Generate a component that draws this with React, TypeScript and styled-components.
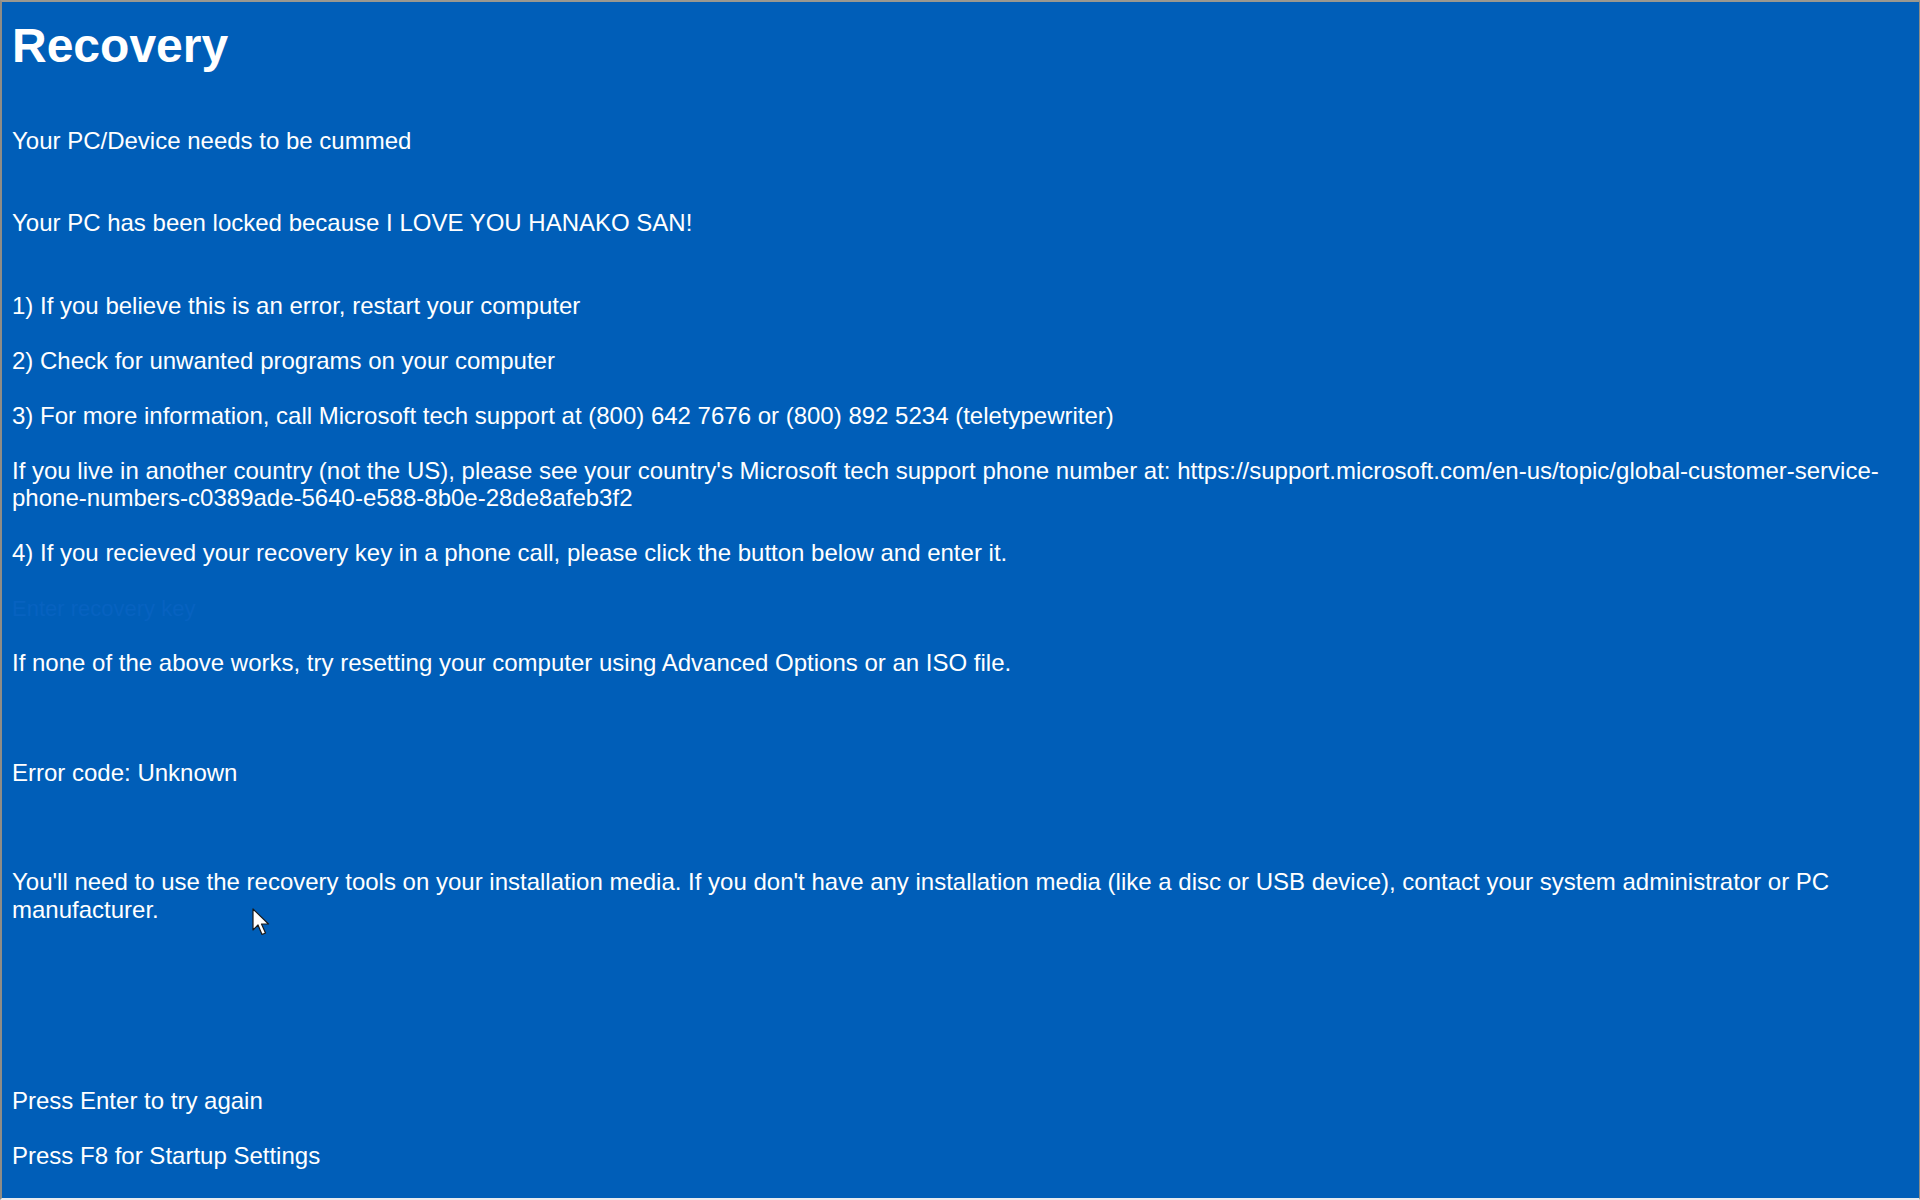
import styled, { createGlobalStyle } from "styled-components";

const GlobalStyle = createGlobalStyle`
html, body{
    margin: 0;
    padding: 0;
    background: #005eb8;
}
#root{ height: 100vh; }
`;

type Block = {
    text: string,
    extra?: number,
    hidden?: boolean
}

// gaps below each paragraph are counted in empty lines, like the <br>s of the original page
const lines: Block[] = [
    { text: "Your PC/Device needs to be cummed", extra: 1 },
    { text: "Your PC has been locked because I LOVE YOU HANAKO SAN!", extra: 1 },
    { text: "1) If you believe this is an error, restart your computer" },
    { text: "2) Check for unwanted programs on your computer" },
    { text: "3) For more information, call Microsoft tech support at (800) 642 7676 or (800) 892 5234 (teletypewriter)" },
    { text: "If you live in another country (not the US), please see your country's Microsoft tech support phone number at: https://support.microsoft.com/en-us/topic/global-customer-service-phone-numbers-c0389ade-5640-e588-8b0e-28de8afeb3f2" },
    { text: "4) If you recieved your recovery key in a phone call, please click the button below and enter it." },
    { text: "Enter recovery key", hidden: true },
    { text: "If none of the above works, try resetting your computer using Advanced Options or an ISO file.", extra: 2 },
    { text: "Error code: Unknown", extra: 2 },
    { text: "You'll need to use the recovery tools on your installation media. If you don't have any installation media (like a disc or USB device), contact your system administrator or PC manufacturer.", extra: 5 },
    { text: "Press Enter to try again" },
    { text: "Press F8 for Startup Settings" },
]

export default function App() {
    return (
        <>
            <GlobalStyle />
            <Screen>
                <Title>Recovery</Title>
                {lines.map((line, i) => line.hidden
                    ? <KeyLink key={i} $extra={line.extra ?? 0}>{line.text}</KeyLink>
                    : <Para key={i} $extra={line.extra ?? 0}>{line.text}</Para>
                )}
                <Cursor width="18" height="28" viewBox="0 0 18 28">
                    <path d="M1 1 L1 22 L6 17 L10 26.5 L13.5 25 L9.5 16 L16.5 16 Z" fill="#ffffff" stroke="#1a1a1a" strokeWidth="1.2" strokeLinejoin="round" />
                </Cursor>
            </Screen>
        </>
    )
}

const Screen = styled.div`
position: relative;
box-sizing: border-box;
height: 100%;
padding: 16px 10px 0 10px;
background: #005eb8;
border-top: 2px solid #9a9890;
border-left: 2px solid #8e8c86;
border-right: 1px solid #8e8c86;
border-bottom: 2px solid #e8ecf0;
color: #ffffff;
font-family: "Liberation Sans", Arial, sans-serif;
overflow: hidden;
`;

const Title = styled.h1`
margin: 0 0 54px 0;
font-size: 48px;
font-weight: 700;
line-height: 55px;
`;

const Para = styled.p<{ $extra: number }>`
margin: 0 0 ${({ $extra }) => 27.5 + $extra * 27.3}px 0;
font-size: 24px;
line-height: 27.5px;
`;

const KeyLink = styled.a<{ $extra: number }>`
display: block;
margin: 0 0 ${({ $extra }) => 25 + $extra * 27.3}px 0;
font-size: 22px;
line-height: 30px;
color: #0762c0;
cursor: pointer;
`;

const Cursor = styled.svg`
position: absolute;
left: 250px;
top: 906px;
`;
